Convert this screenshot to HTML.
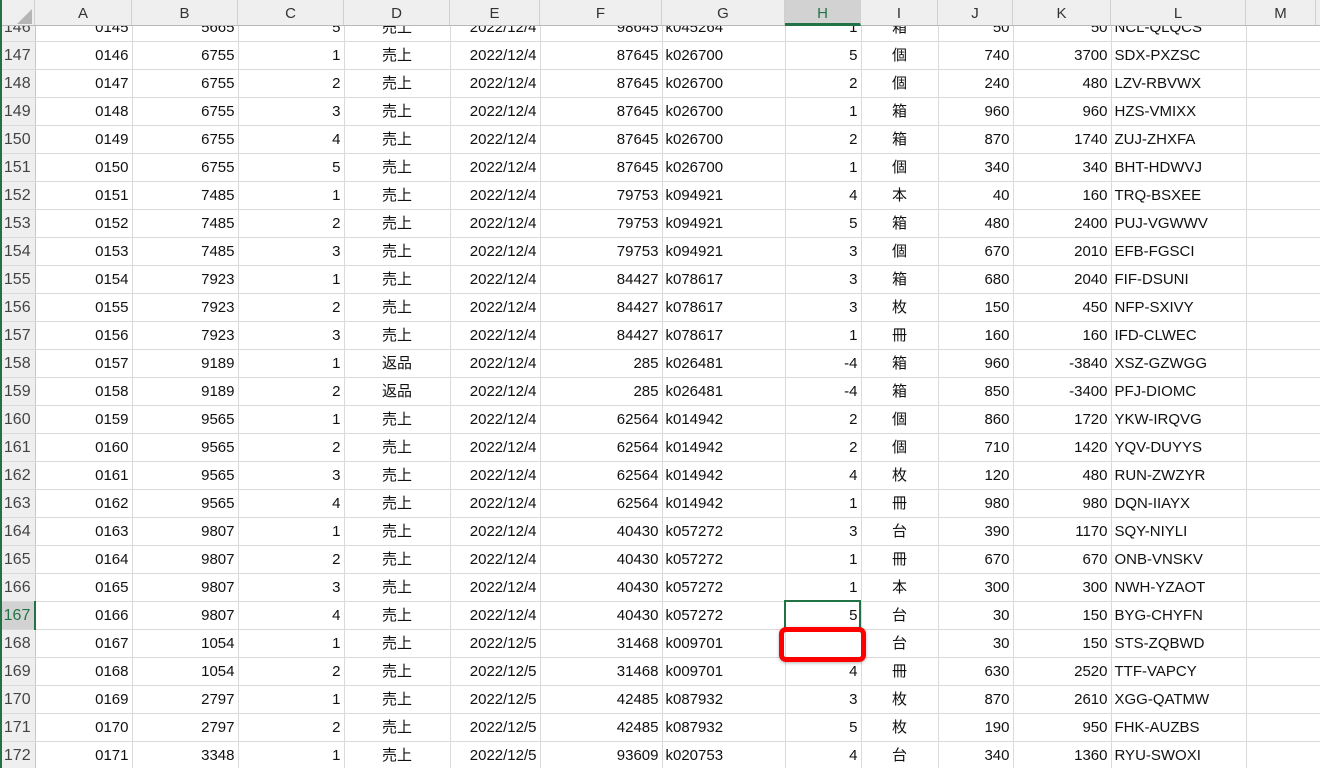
<!DOCTYPE html>
<html><head><meta charset="utf-8">
<style>
html,body{margin:0;padding:0;width:1320px;height:768px;overflow:hidden;background:#fff;}
body{position:relative;font-family:"Liberation Sans","Noto Sans CJK JP",sans-serif;font-size:15px;color:#111;}
#hdr{position:absolute;left:0;top:0;height:26px;width:1320px;background:#efefef;border-bottom:1px solid #b8b8b8;box-sizing:border-box;z-index:3;}
#hdr div{position:absolute;top:0;height:25px;line-height:27px;text-align:center;color:#333;border-right:1px solid #d0d0d0;box-sizing:border-box;font-size:15px;}
#hdr .sel{background:#d2d2d2;border-bottom:3px solid #217346;height:26px;color:#217346;}
#corner{position:absolute;left:17px;top:9px;width:0;height:0;border-left:15px solid transparent;border-bottom:15px solid #b5b5b5;}
table{position:absolute;left:0;top:14px;border-collapse:collapse;table-layout:fixed;width:1320px;}
td{height:27px;padding:0 3px;border-right:1px solid #dadada;border-bottom:1px solid #dadada;white-space:nowrap;overflow:hidden;line-height:27px;}
td:first-child{background:#efefef;text-align:center;color:#444;border-right:1px solid #c8c8c8;padding:0;font-size:16px;}
tr td:nth-child(2),tr td:nth-child(3),tr td:nth-child(4),tr td:nth-child(6),tr td:nth-child(7),tr td:nth-child(9),tr td:nth-child(11),tr td:nth-child(12){text-align:right;}
tr td:nth-child(5),tr td:nth-child(10){text-align:center;}
tr.s td:first-child{background:#d2d2d2;color:#217346;border-right:2px solid #217346;}
#green{position:absolute;left:0;top:0;width:2px;height:768px;background:#217346;z-index:4;}
#selcell{position:absolute;left:784px;top:600px;width:77px;height:29px;border:2px solid #217346;box-sizing:border-box;z-index:2;}
#red{position:absolute;left:779px;top:627px;width:87px;height:35px;border:5px solid #ff0000;border-radius:7px;box-sizing:border-box;z-index:2;box-shadow:0 1px 3px rgba(0,0,0,.3);}
</style></head><body>
<div id="hdr">
<div style="left:0;width:35px"><span id="corner"></span></div>
<div style="left:35px;width:97px">A</div>
<div style="left:132px;width:106px">B</div>
<div style="left:238px;width:106px">C</div>
<div style="left:344px;width:106px">D</div>
<div style="left:450px;width:90px">E</div>
<div style="left:540px;width:122px">F</div>
<div style="left:662px;width:123px">G</div>
<div class="sel" style="left:785px;width:76px">H</div>
<div style="left:861px;width:77px">I</div>
<div style="left:938px;width:75px">J</div>
<div style="left:1013px;width:98px">K</div>
<div style="left:1111px;width:135px">L</div>
<div style="left:1246px;width:70px">M</div>
</div>
<div id="green"></div>
<table>
<colgroup><col style="width:35px"><col style="width:97px"><col style="width:106px"><col style="width:106px"><col style="width:106px"><col style="width:90px"><col style="width:122px"><col style="width:123px"><col style="width:76px"><col style="width:77px"><col style="width:75px"><col style="width:98px"><col style="width:135px"><col style="width:74px"></colgroup>
<tr><td>146</td><td>0145</td><td>5665</td><td>5</td><td>売上</td><td>2022/12/4</td><td>98645</td><td>k045264</td><td>1</td><td>箱</td><td>50</td><td>50</td><td>NCL-QLQCS</td><td></td></tr>
<tr><td>147</td><td>0146</td><td>6755</td><td>1</td><td>売上</td><td>2022/12/4</td><td>87645</td><td>k026700</td><td>5</td><td>個</td><td>740</td><td>3700</td><td>SDX-PXZSC</td><td></td></tr>
<tr><td>148</td><td>0147</td><td>6755</td><td>2</td><td>売上</td><td>2022/12/4</td><td>87645</td><td>k026700</td><td>2</td><td>個</td><td>240</td><td>480</td><td>LZV-RBVWX</td><td></td></tr>
<tr><td>149</td><td>0148</td><td>6755</td><td>3</td><td>売上</td><td>2022/12/4</td><td>87645</td><td>k026700</td><td>1</td><td>箱</td><td>960</td><td>960</td><td>HZS-VMIXX</td><td></td></tr>
<tr><td>150</td><td>0149</td><td>6755</td><td>4</td><td>売上</td><td>2022/12/4</td><td>87645</td><td>k026700</td><td>2</td><td>箱</td><td>870</td><td>1740</td><td>ZUJ-ZHXFA</td><td></td></tr>
<tr><td>151</td><td>0150</td><td>6755</td><td>5</td><td>売上</td><td>2022/12/4</td><td>87645</td><td>k026700</td><td>1</td><td>個</td><td>340</td><td>340</td><td>BHT-HDWVJ</td><td></td></tr>
<tr><td>152</td><td>0151</td><td>7485</td><td>1</td><td>売上</td><td>2022/12/4</td><td>79753</td><td>k094921</td><td>4</td><td>本</td><td>40</td><td>160</td><td>TRQ-BSXEE</td><td></td></tr>
<tr><td>153</td><td>0152</td><td>7485</td><td>2</td><td>売上</td><td>2022/12/4</td><td>79753</td><td>k094921</td><td>5</td><td>箱</td><td>480</td><td>2400</td><td>PUJ-VGWWV</td><td></td></tr>
<tr><td>154</td><td>0153</td><td>7485</td><td>3</td><td>売上</td><td>2022/12/4</td><td>79753</td><td>k094921</td><td>3</td><td>個</td><td>670</td><td>2010</td><td>EFB-FGSCI</td><td></td></tr>
<tr><td>155</td><td>0154</td><td>7923</td><td>1</td><td>売上</td><td>2022/12/4</td><td>84427</td><td>k078617</td><td>3</td><td>箱</td><td>680</td><td>2040</td><td>FIF-DSUNI</td><td></td></tr>
<tr><td>156</td><td>0155</td><td>7923</td><td>2</td><td>売上</td><td>2022/12/4</td><td>84427</td><td>k078617</td><td>3</td><td>枚</td><td>150</td><td>450</td><td>NFP-SXIVY</td><td></td></tr>
<tr><td>157</td><td>0156</td><td>7923</td><td>3</td><td>売上</td><td>2022/12/4</td><td>84427</td><td>k078617</td><td>1</td><td>冊</td><td>160</td><td>160</td><td>IFD-CLWEC</td><td></td></tr>
<tr><td>158</td><td>0157</td><td>9189</td><td>1</td><td>返品</td><td>2022/12/4</td><td>285</td><td>k026481</td><td>-4</td><td>箱</td><td>960</td><td>-3840</td><td>XSZ-GZWGG</td><td></td></tr>
<tr><td>159</td><td>0158</td><td>9189</td><td>2</td><td>返品</td><td>2022/12/4</td><td>285</td><td>k026481</td><td>-4</td><td>箱</td><td>850</td><td>-3400</td><td>PFJ-DIOMC</td><td></td></tr>
<tr><td>160</td><td>0159</td><td>9565</td><td>1</td><td>売上</td><td>2022/12/4</td><td>62564</td><td>k014942</td><td>2</td><td>個</td><td>860</td><td>1720</td><td>YKW-IRQVG</td><td></td></tr>
<tr><td>161</td><td>0160</td><td>9565</td><td>2</td><td>売上</td><td>2022/12/4</td><td>62564</td><td>k014942</td><td>2</td><td>個</td><td>710</td><td>1420</td><td>YQV-DUYYS</td><td></td></tr>
<tr><td>162</td><td>0161</td><td>9565</td><td>3</td><td>売上</td><td>2022/12/4</td><td>62564</td><td>k014942</td><td>4</td><td>枚</td><td>120</td><td>480</td><td>RUN-ZWZYR</td><td></td></tr>
<tr><td>163</td><td>0162</td><td>9565</td><td>4</td><td>売上</td><td>2022/12/4</td><td>62564</td><td>k014942</td><td>1</td><td>冊</td><td>980</td><td>980</td><td>DQN-IIAYX</td><td></td></tr>
<tr><td>164</td><td>0163</td><td>9807</td><td>1</td><td>売上</td><td>2022/12/4</td><td>40430</td><td>k057272</td><td>3</td><td>台</td><td>390</td><td>1170</td><td>SQY-NIYLI</td><td></td></tr>
<tr><td>165</td><td>0164</td><td>9807</td><td>2</td><td>売上</td><td>2022/12/4</td><td>40430</td><td>k057272</td><td>1</td><td>冊</td><td>670</td><td>670</td><td>ONB-VNSKV</td><td></td></tr>
<tr><td>166</td><td>0165</td><td>9807</td><td>3</td><td>売上</td><td>2022/12/4</td><td>40430</td><td>k057272</td><td>1</td><td>本</td><td>300</td><td>300</td><td>NWH-YZAOT</td><td></td></tr>
<tr class="s"><td>167</td><td>0166</td><td>9807</td><td>4</td><td>売上</td><td>2022/12/4</td><td>40430</td><td>k057272</td><td>5</td><td>台</td><td>30</td><td>150</td><td>BYG-CHYFN</td><td></td></tr>
<tr><td>168</td><td>0167</td><td>1054</td><td>1</td><td>売上</td><td>2022/12/5</td><td>31468</td><td>k009701</td><td></td><td>台</td><td>30</td><td>150</td><td>STS-ZQBWD</td><td></td></tr>
<tr><td>169</td><td>0168</td><td>1054</td><td>2</td><td>売上</td><td>2022/12/5</td><td>31468</td><td>k009701</td><td>4</td><td>冊</td><td>630</td><td>2520</td><td>TTF-VAPCY</td><td></td></tr>
<tr><td>170</td><td>0169</td><td>2797</td><td>1</td><td>売上</td><td>2022/12/5</td><td>42485</td><td>k087932</td><td>3</td><td>枚</td><td>870</td><td>2610</td><td>XGG-QATMW</td><td></td></tr>
<tr><td>171</td><td>0170</td><td>2797</td><td>2</td><td>売上</td><td>2022/12/5</td><td>42485</td><td>k087932</td><td>5</td><td>枚</td><td>190</td><td>950</td><td>FHK-AUZBS</td><td></td></tr>
<tr><td>172</td><td>0171</td><td>3348</td><td>1</td><td>売上</td><td>2022/12/5</td><td>93609</td><td>k020753</td><td>4</td><td>台</td><td>340</td><td>1360</td><td>RYU-SWOXI</td><td></td></tr>
</table>
<div id="selcell"></div>
<div id="red"></div>
</body></html>
